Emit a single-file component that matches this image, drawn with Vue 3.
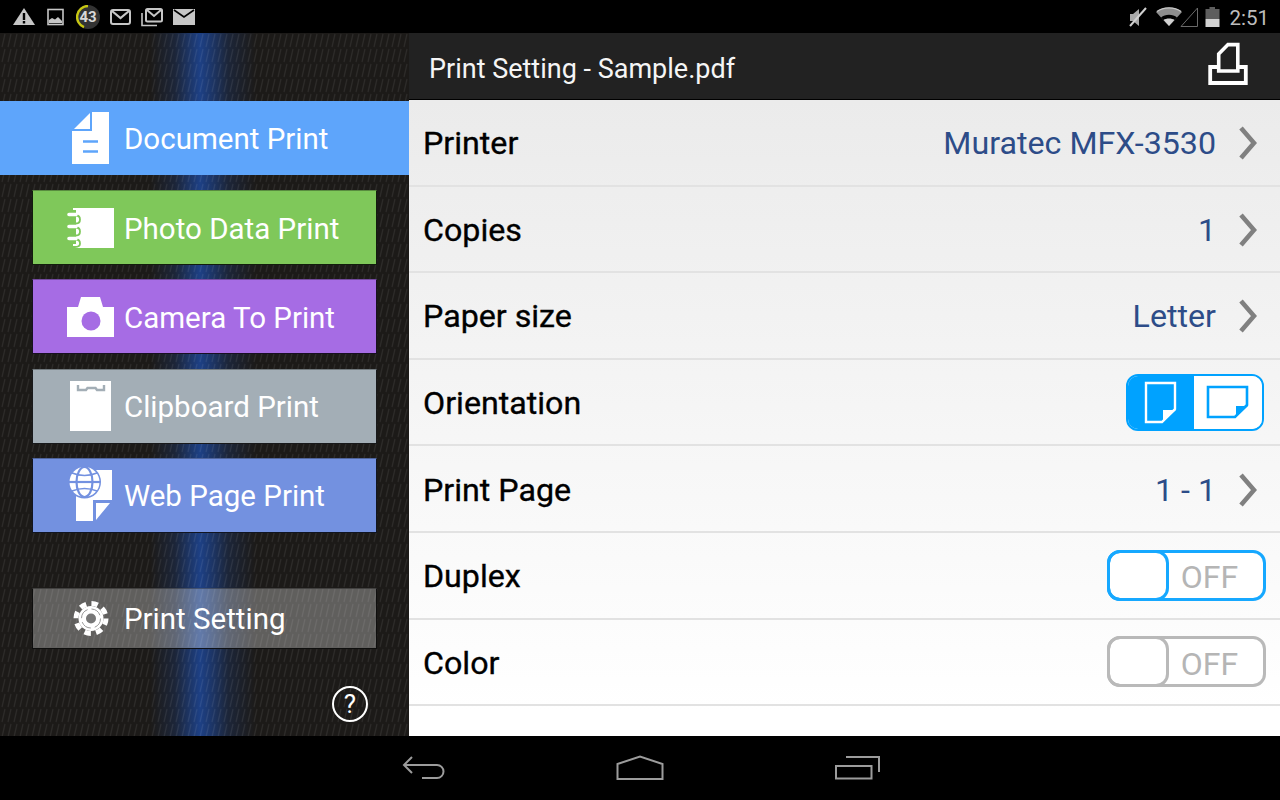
<template>
  <div class="screen">
    <div class="status">
      <div class="status-left">
        <svg width="24" height="20" viewBox="13 7 24 20">
          <path d="M24 8 L35 25 H13 Z" fill="#c6c6c6" />
          <path d="M22.8 13 H25.2 V20 H22.8 Z M22.8 21 H25.2 V23.4 H22.8 Z" fill="#000" />
        </svg>
        <svg width="19" height="20" viewBox="47 7 19 20">
          <rect x="48" y="9.5" width="15" height="15" fill="none" stroke="#c6c6c6" stroke-width="1.6" />
          <path d="M49 22 V20 L52 18 L55 19.5 L58 17 L62 21 V23 H49 Z" fill="#c6c6c6" />
        </svg>
        <svg width="24" height="24" viewBox="76 4 24 24" class="counter">
          <circle cx="88" cy="16" r="12" fill="#333" />
          <path d="M88 5 A11 11 0 0 0 84 26.2" fill="none" stroke="#c7c712" stroke-width="2.4" />
          <text x="88" y="21.3" text-anchor="middle">43</text>
        </svg>
        <svg width="21" height="18" viewBox="110 8 21 18">
          <rect x="111" y="10" width="19" height="14" rx="2" fill="#000" stroke="#c6c6c6" stroke-width="2" />
          <path d="M112 11 L120.5 18 L129 11" fill="none" stroke="#c6c6c6" stroke-width="2.2" />
        </svg>
        <svg width="22" height="20" viewBox="141 7 22 20">
          <path d="M142 13 V25.5 H157" fill="none" stroke="#c6c6c6" stroke-width="1.6" />
          <rect x="146" y="9" width="16" height="12.5" rx="1.5" fill="#000" stroke="#c6c6c6" stroke-width="2" />
          <path d="M147 10 L154 16 L161 10" fill="none" stroke="#c6c6c6" stroke-width="2" />
        </svg>
        <svg width="22" height="18" viewBox="173 8 22 18">
          <rect x="173" y="9" width="22" height="16" fill="#c6c6c6" />
          <path d="M174 10 L184 17 L194 10" fill="none" stroke="#000" stroke-width="1.6" />
        </svg>
      </div>
      <div class="status-right">
        <svg width="19" height="22" viewBox="1131 5 19 22">
          <path d="M1136 13 L1142 8 V25 L1136 20 H1133 V13 Z" fill="#a8a8a8" />
          <path d="M1133 25 L1149 7" stroke="#d0d0d0" stroke-width="2" />
        </svg>
        <svg width="49" height="22" viewBox="1159 5 49 22">
          <path d="M1172 25 L1159 11 C1166 5 1178 5 1185 11 Z" fill="#8e8e8e" />
          <path d="M1172 25 L1164 16.4 C1168 13 1176 13 1180 16.4 Z" fill="#000" />
          <path d="M1172 25 L1166.5 19 C1169 17 1175 17 1177.5 19 Z" fill="#d2d2d2" />
          <path d="M1160 10.5 C1166 5.6 1178 5.6 1184 10.5" fill="none" stroke="#c8c8c8" stroke-width="1.4" />
          <path d="M1184 25.5 L1200.5 7 V25.5 Z" fill="none" stroke="#6a6a6a" stroke-width="1" />
        </svg>
        <svg width="15" height="22" viewBox="1208 5 15 22">
          <path d="M1212.5 6 H1218 V8 H1222.5 V18 H1208.5 V8 H1212.5 Z" fill="#5e5e5e" />
          <rect x="1208.5" y="18" width="14" height="8" fill="#d2d2d2" />
        </svg>
        <span class="time">2:51</span>
      </div>
    </div>

    <div class="main">
      <aside class="sidebar">
        <div class="doc-item">
          <svg class="menu-icon" width="50" height="60" viewBox="65 108 50 60">
            <path d="M74 129 L90 113 V129 Z" fill="#fff" />
            <path d="M92 112 H109 V164 H72 V131 H92 Z" fill="#fff" />
            <path d="M83 141.5 H98 M83 151.5 H98" stroke="#5ea5fb" stroke-width="2.4" />
          </svg>
          <span>Document Print</span>
        </div>

        <div class="menu-list">
          <div v-for="item in menu" :key="item.label" class="menu-item" :class="item.cls">
            <svg v-if="item.cls === 'photo'" class="menu-icon" width="50" height="60" viewBox="65 197 50 60">
              <path d="M73 207 H114 V247 H73 V243 H80 V209 H73 Z" fill="#fff" />
              <rect x="76" y="207" width="6" height="40" fill="#fff" />
              <path d="M69 214.5 H76 Q80 214.5 80 218.5 Q80 222.5 76 222.5 H72 M69 226.5 H76 Q80 226.5 80 230.5 Q80 234.5 76 234.5 H72 M69 238.5 H76 Q80 238.5 80 242.5 Q80 246 75 246 H72" fill="none" stroke="#7fc85a" stroke-width="1.8" />
              <path d="M69 213.5 H76 M69 225.5 H76 M69 237.5 H76" stroke="#fff" stroke-width="3.6" stroke-linecap="round" />
            </svg>
            <svg v-else-if="item.cls === 'camera'" class="menu-icon" width="50" height="60" viewBox="65 287 50 60">
              <path d="M81 297 H100 L103 307 H114 V337 H67 V307 H78 Z" fill="#fff" />
              <circle cx="91" cy="321" r="9.5" fill="#a66ce4" />
            </svg>
            <svg v-else-if="item.cls === 'clip'" class="menu-icon" width="50" height="60" viewBox="65 376 50 60">
              <rect x="70" y="381" width="41" height="50" fill="#fff" />
              <path d="M78 385 V390 H86 L87.5 388 H95.5 L97 390 H104 V385" fill="none" stroke="#a3aeb6" stroke-width="2.4" />
            </svg>
            <svg v-else-if="item.cls === 'web'" class="menu-icon" width="50" height="60" viewBox="65 466 50 60">
              <path d="M90 471 H112 V501 H93 V522 H76 V490 H90 Z" fill="#fff" />
              <path d="M96 504 H110 L96 521 Z" fill="#fff" />
              <circle cx="84.5" cy="483" r="16.5" fill="#7391e0" />
              <circle cx="84.5" cy="483" r="15" fill="#fff" />
              <ellipse cx="84.5" cy="483" rx="8" ry="15" fill="none" stroke="#7391e0" stroke-width="2.2" />
              <path d="M69 483 H100" stroke="#7391e0" stroke-width="2.2" />
              <path d="M72 474 Q84.5 479 97 474 M72 492 Q84.5 487 97 492" fill="none" stroke="#7391e0" stroke-width="1.6" />
            </svg>
            <svg v-else class="menu-icon" width="50" height="60" viewBox="65 588 50 60">
              <circle cx="91" cy="618.5" r="12.5" fill="#fff" />
              <circle cx="91" cy="618.5" r="15" fill="none" stroke="#fff" stroke-width="5" stroke-dasharray="6.5 5.28" />
              <circle cx="91" cy="618.5" r="9.5" fill="none" stroke="#999" stroke-width="1" stroke-dasharray="11 4" />
              <circle cx="91" cy="618.5" r="5" fill="#777" />
            </svg>
            <span>{{ item.label }}</span>
          </div>
        </div>

        <div class="help">?</div>
      </aside>

      <section class="panel">
        <header class="title-bar">
          <span class="title">Print Setting - Sample.pdf</span>
          <svg class="title-icon" width="42" height="46" viewBox="1207 41 42 46">
            <path d="M1218.7 71 V54 L1228 44.6 H1237.8 V71 Z" fill="none" stroke="#fff" stroke-width="3.6" />
            <path d="M1218 67 H1210.2 V83 H1245.8 V67 H1238" fill="none" stroke="#fff" stroke-width="3.8" />
          </svg>
        </header>

        <div class="settings">
          <div v-for="row in rows" :key="row.label" class="row">
            <span class="label">{{ row.label }}</span>

            <template v-if="row.value">
              <span class="value">{{ row.value }}</span>
              <svg class="chevron" width="18" height="34" viewBox="0 0 18 34">
                <path d="M2 2 L15 17 L2 32" fill="none" stroke="#808080" stroke-width="4.6" />
              </svg>
            </template>

            <div v-else-if="row.orientation" class="orient">
              <div class="orient-on">
                <svg width="34" height="43" viewBox="0 0 34 43">
                  <path d="M2 2 H31 V28 L18 41 H2 Z" fill="none" stroke="#fff" stroke-width="2.4" />
                  <path d="M19 41 V29 H32 Z" fill="#fff" />
                </svg>
              </div>
              <div class="orient-off">
                <svg width="44" height="34" viewBox="0 0 44 34">
                  <path d="M2 2 H41 V20 L29 32 H2 Z" fill="none" stroke="#00a2ff" stroke-width="2.6" />
                  <path d="M30 32 V21 H42 Z" fill="#00a2ff" />
                </svg>
              </div>
            </div>

            <div v-else class="toggle" :class="{ focused: row.focused }">
              <div class="knob"></div>
              <span class="off">OFF</span>
            </div>
          </div>
        </div>
      </section>
    </div>

    <nav class="navbar">
      <svg width="44" height="26" viewBox="402 757 44 26">
        <path d="M412 759 L404 767 L412 775 M404 767 H437 A6.5 6.5 0 0 1 437 780 H422" fill="none" stroke="#9c9c9c" stroke-width="2" />
      </svg>
      <svg width="48" height="26" viewBox="616 756 48 26">
        <path d="M617.5 765 L640 757.5 L662.5 765 V780 H617.5 Z" fill="none" stroke="#9c9c9c" stroke-width="2" />
      </svg>
      <svg width="46" height="26" viewBox="834 757 46 26">
        <path d="M836 768 H871.5 V780.5 H836 Z M846 759 H879 V774" fill="none" stroke="#9c9c9c" stroke-width="2" />
      </svg>
    </nav>
  </div>
</template>

<script setup>
const menu = [
  { label: 'Photo Data Print', cls: 'photo' },
  { label: 'Camera To Print', cls: 'camera' },
  { label: 'Clipboard Print', cls: 'clip' },
  { label: 'Web Page Print', cls: 'web' },
  { label: 'Print Setting', cls: 'setting' },
]

const rows = [
  { label: 'Printer', value: 'Muratec MFX-3530' },
  { label: 'Copies', value: '1' },
  { label: 'Paper size', value: 'Letter' },
  { label: 'Orientation', orientation: true },
  { label: 'Print Page', value: '1 - 1' },
  { label: 'Duplex', focused: true },
  { label: 'Color' },
]
</script>

<style>
html,
body {
  margin: 0;
  background: #000;
}
</style>

<style scoped>
.screen {
  width: 1280px;
  height: 800px;
  display: flex;
  flex-direction: column;
  background: #000;
  font-family: Roboto, "Liberation Sans", sans-serif;
  overflow: hidden;
}
svg {
  display: block;
  flex: none;
}

.status {
  height: 33px;
  flex: none;
  display: flex;
  justify-content: space-between;
  align-items: center;
  padding: 0 11px 0 13px;
}
.status-left {
  display: flex;
  align-items: center;
  gap: 10px;
}
.counter text {
  font-family: Roboto, sans-serif;
  font-size: 15px;
  font-weight: 700;
  fill: #d8d8d8;
}
.status-right {
  display: flex;
  align-items: center;
  gap: 9px;
}
.status-right svg:nth-child(2) {
  margin-right: -9px;
}
.time {
  color: #bdbdbd;
  font-size: 20.5px;
  padding-top: 2px;
}

.main {
  flex: 1;
  display: flex;
  min-height: 0;
}
.sidebar {
  width: 409px;
  flex: none;
  display: flex;
  flex-direction: column;
  padding: 68px 0 14px;
  box-sizing: border-box;
  background-color: #1c1a18;
  background-image:
    url("data:image/svg+xml,%3Csvg xmlns='http://www.w3.org/2000/svg' width='6' height='15'%3E%3Cpath d='M2 14 L5 1' stroke='%23ffffff' stroke-opacity='0.075' stroke-width='1.2'/%3E%3C/svg%3E"),
    linear-gradient(90deg, rgba(29, 64, 133, 0) 150px, rgba(29, 64, 133, 0.3) 175px, rgba(29, 64, 133, 0.72) 190px, #1d4085 200px, rgba(29, 64, 133, 0.72) 212px, rgba(29, 64, 133, 0.3) 228px, rgba(29, 64, 133, 0) 256px);
}
.doc-item {
  height: 74px;
  display: flex;
  align-items: center;
  background: #5ea5fb;
  color: #fff;
  font-size: 29.5px;
  padding-left: 65px;
  gap: 9px;
}
.doc-item span,
.menu-item span {
  padding-top: 2px;
}
.menu-list {
  display: flex;
  flex-direction: column;
  gap: 14.3px;
  margin: 15px 32px 0;
}
.menu-item {
  height: 75px;
  display: flex;
  align-items: center;
  box-sizing: border-box;
  border: 1px solid rgba(0, 0, 0, 0.85);
  border-top-color: rgba(0, 0, 0, 0.3);
  color: #fff;
  font-size: 29.5px;
  padding-left: 32px;
  gap: 9px;
}
.photo { background: #7fc85a; }
.camera { background: #a66ce4; }
.clip { background: #a3aeb6; }
.web { background: #7391e0; }
.setting {
  background: rgba(255, 255, 255, 0.3);
  height: 61.5px;
  margin-top: 40.5px;
}
.help {
  margin: auto 41px 0 auto;
  width: 36px;
  height: 36px;
  box-sizing: border-box;
  border: 2px solid #fff;
  border-radius: 50%;
  color: #fff;
  font-size: 26px;
  line-height: 32px;
  text-align: center;
}

.panel {
  flex: 1;
  display: flex;
  flex-direction: column;
  min-width: 0;
}
.title-bar {
  height: 67px;
  flex: none;
  display: flex;
  align-items: center;
  justify-content: space-between;
  box-sizing: border-box;
  background: #222;
  color: #f5f5f5;
  font-size: 27px;
  padding: 0 31px 0 20px;
  border-bottom: 1px solid #000;
}
.title {
  padding-top: 5px;
}
.title-icon {
  margin-bottom: 4px;
}
.settings {
  flex: 1;
  background: linear-gradient(#ebebeb, #fff 96%);
}
.row {
  height: 86.6px;
  box-sizing: border-box;
  display: flex;
  align-items: center;
  padding: 0 14px;
  border-bottom: 2px solid #e2e2e2;
  font-size: 32.2px;
}
.label {
  flex: 1;
  color: #000;
  padding-top: 2px;
  -webkit-text-stroke: 0.35px #000;
}
.value {
  color: #2d4c88;
  padding-top: 2px;
}
.chevron {
  margin: 2px 9px 0 23px;
}
.orient {
  display: flex;
  width: 138px;
  height: 57px;
  margin-right: 2px;
  border: 2px solid #00a2ff;
  border-radius: 12px;
  box-sizing: border-box;
  overflow: hidden;
}
.orient-on,
.orient-off {
  display: flex;
  align-items: center;
  justify-content: center;
}
.orient-on {
  width: 66px;
  background: #00a2ff;
}
.orient-off {
  flex: 1;
  background: #fff;
}
.toggle {
  width: 159px;
  height: 51px;
  box-sizing: border-box;
  display: flex;
  align-items: center;
  border: 3px solid #b9b9b9;
  border-radius: 13px;
  background: #fff;
}
.knob {
  width: 62px;
  height: 51px;
  margin: -3px 0 -3px -3px;
  flex: none;
  box-sizing: border-box;
  border: 3px solid #b9b9b9;
  border-radius: 13px;
}
.off {
  flex: 1;
  text-align: center;
  color: #b5b5b5;
  font-size: 32px;
  padding: 4px 13px 0 0;
}
.toggle.focused,
.toggle.focused .knob {
  border-color: #16a8ff;
}

.navbar {
  height: 64px;
  flex: none;
  display: flex;
  align-items: center;
  justify-content: center;
  gap: 170px;
  padding-left: 1px;
}
</style>
